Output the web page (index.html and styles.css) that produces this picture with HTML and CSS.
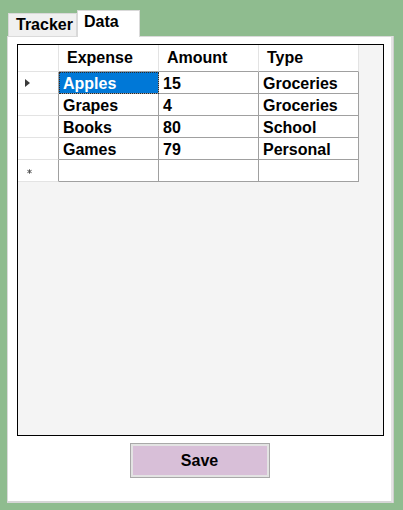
FILE: index.html
```html
<!DOCTYPE html>
<html>
<head>
<meta charset="utf-8">
<link rel="stylesheet" href="styles.css">
</head>
<body>
<div class="tabs">
  <div class="tab tab-tracker">Tracker</div>
  <div class="tab tab-data">Data</div>
</div>
<div class="panel">
  <div class="grid-view">
    <div class="table">
      <div class="hcell corner"></div>
      <div class="hcell">Expense</div>
      <div class="hcell">Amount</div>
      <div class="hcell">Type</div>

      <div class="rhead"><svg width="5" height="8" viewBox="0 0 5 8"><polygon points="0,0 5,4 0,8" fill="#3a3a3a"/></svg></div>
      <div class="cell selected">Apples</div>
      <div class="cell">15</div>
      <div class="cell">Groceries</div>

      <div class="rhead"></div>
      <div class="cell">Grapes</div>
      <div class="cell">4</div>
      <div class="cell">Groceries</div>

      <div class="rhead"></div>
      <div class="cell">Books</div>
      <div class="cell">80</div>
      <div class="cell">School</div>

      <div class="rhead"></div>
      <div class="cell">Games</div>
      <div class="cell">79</div>
      <div class="cell">Personal</div>

      <div class="rhead newrow"><svg width="5" height="5" viewBox="0 0 5 5"><path d="M2.5 0.3V4.7M0.4 1.3L4.6 3.7M0.4 3.7L4.6 1.3" stroke="#555" stroke-width="1"/></svg></div>
      <div class="cell"></div>
      <div class="cell"></div>
      <div class="cell"></div>
    </div>
  </div>
  <div class="actions">
    <button class="save-btn">Save</button>
  </div>
</div>
</body>
</html>
```

FILE: styles.css
```css
html, body {
  margin: 0;
  padding: 0;
}
body {
  width: 403px;
  height: 510px;
  background: #8fbc8f;
  font-family: "Liberation Sans", Arial, sans-serif;
  font-weight: bold;
  font-size: 16px;
  color: #000;
  overflow: hidden;
}
.tabs {
  display: flex;
  align-items: flex-start;
  padding: 10px 0 0 8px;
  height: 27px;
}
.tab {
  box-sizing: border-box;
  line-height: 18px;
  border: 1px solid #d9d9d9;
  border-bottom: none;
  white-space: nowrap;
}
.tab-tracker {
  margin-top: 3px;
  width: 69px;
  height: 23px;
  padding: 2px 0 0 7px;
  background: #f0f0f0;
}
.tab-data {
  position: relative;
  z-index: 1;
  width: 63px;
  height: 27px;
  padding: 2px 0 0 6px;
  background: #fff;
}
.panel {
  box-sizing: border-box;
  margin: -1px 0 0 7px;
  width: 386px;
  height: 467px;
  background: #fff;
  border: 1px solid #dadada;
  border-right: 2px solid #e4e4e4;
  border-bottom: 2px solid #d6d6d6;
  box-shadow: 1px 0 0 #cfcfcf;
  padding: 7px 7px 0 9px;
  display: flex;
  flex-direction: column;
}
.grid-view {
  box-sizing: border-box;
  width: 367px;
  height: 392px;
  border: 1px solid #000;
  background: #f4f4f4;
}
.table {
  display: grid;
  grid-template-columns: 41px 100px 100px 100px;
  grid-template-rows: 27px repeat(5, 22px);
  width: 341px;
}
.hcell, .rhead, .cell {
  box-sizing: border-box;
  background: #fff;
  white-space: nowrap;
  overflow: hidden;
}
.hcell {
  display: flex;
  align-items: center;
  padding-left: 8px;
  border-right: 1px solid #e3e3e3;
  border-bottom: 1px solid #a0a0a0;
}
.hcell.corner {
  border-bottom: 1px solid #e3e3e3;
  border-right: 1px solid #e3e3e3;
}
.rhead {
  display: flex;
  align-items: center;
  padding-left: 7px;
  border-right: 1px solid #a0a0a0;
  border-bottom: 1px solid #e3e3e3;
}
.rhead svg {
  display: block;
}
.rhead.newrow {
  padding-left: 9px;
  padding-top: 2px;
}
.cell {
  line-height: 21px;
  padding: 1px 0 0 4px;
  border-right: 1px solid #a0a0a0;
  border-bottom: 1px solid #a0a0a0;
}
.cell.selected {
  background: #0078d7;
  color: #fff;
  outline: 1px dotted #2a2a2a;
  outline-offset: -1px;
}
.actions {
  display: flex;
  justify-content: center;
  padding-top: 7px;
}
.save-btn {
  box-sizing: border-box;
  width: 140px;
  height: 35px;
  margin: 0 0 0 -2px;
  background: #d8bfd8;
  border: 1px solid #a9a9a9;
  box-shadow: inset 0 0 0 2px #e3e3e3;
  font-family: "Liberation Sans", Arial, sans-serif;
  font-weight: bold;
  font-size: 16px;
  color: #000;
  padding: 0;
}
```
